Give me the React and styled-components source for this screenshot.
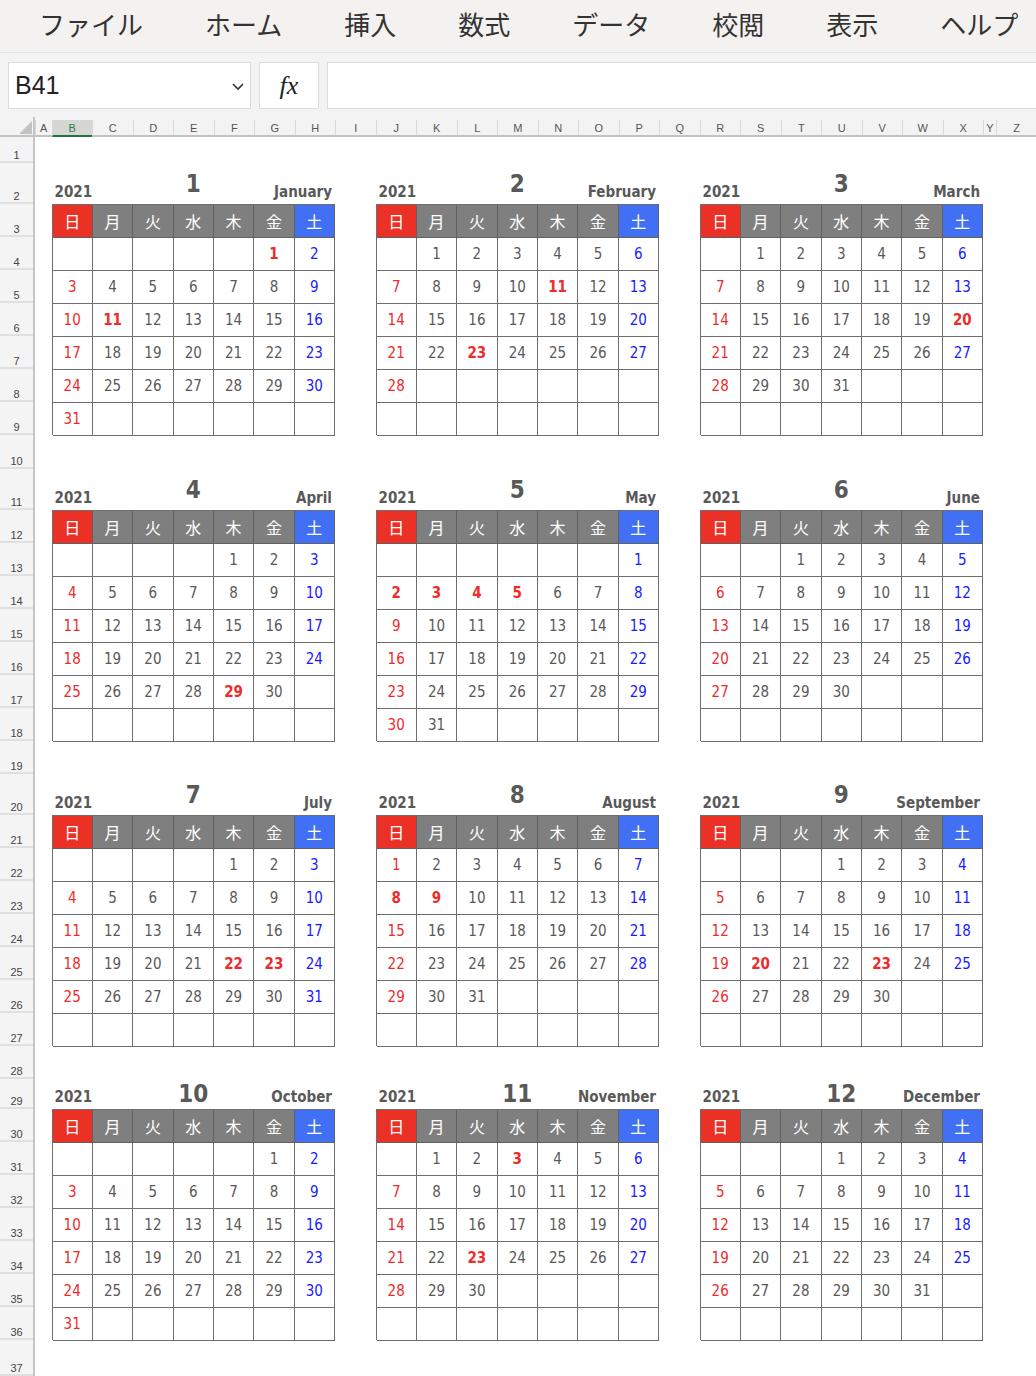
import React from 'react';
import styled, { createGlobalStyle, css } from 'styled-components';

const GlobalStyle = createGlobalStyle`
	html, body {
		margin: 0;
		padding: 0;
		background: #ffffff;
		overflow: hidden;
	}
	body {
		width: 1036px;
		height: 1376px;
		font-family: 'Noto Sans CJK JP', 'Noto Sans', sans-serif;
	}
`;

const MENU = ['ファイル', 'ホーム', '挿入', '数式', 'データ', '校閲', '表示', 'ヘルプ'];
const COLS = 'ABCDEFGHIJKLMNOPQRSTUVWXYZ'.split('');
const ROW_HEIGHTS = [
	26, 41, 33, 33, 33, 33, 33, 33, 33,
	34, 41, 33, 33, 33, 33, 33, 33, 33,
	33, 41, 33, 33, 33, 33, 33, 33, 33,
	33, 30, 33, 33, 33, 33, 33, 33, 33,
	36,
];
const COL_TEMPLATE = '16.5px repeat(23, 40.5px) 13px 1fr';
const BLOCK_ROWS = [2, 11, 20, 29];
const MONTH_NAMES = [
	'January', 'February', 'March', 'April', 'May', 'June',
	'July', 'August', 'September', 'October', 'November', 'December',
];
const WEEK = ['日', '月', '火', '水', '木', '金', '土'];
const HOLIDAYS = {
	1: [1, 11],
	2: [11, 23],
	3: [20],
	4: [29],
	5: [2, 3, 4, 5],
	7: [22, 23],
	8: [8, 9],
	9: [20, 23],
	11: [3, 23],
};

const Page = styled.div`
	width: 1036px;
	height: 1376px;
	display: flex;
	flex-direction: column;
	background: #f3f3f3;
	overflow: hidden;
`;

const MenuBar = styled.div`
	height: 53px;
	display: flex;
	align-items: center;
	gap: 62px;
	padding: 0 0 5px 39px;
	background: #f3f2f1;
	border-bottom: 1px solid #e4e4e4;
	box-sizing: border-box;
	flex-shrink: 0;
`;

const MenuItem = styled.div`
	font-family: 'Noto Sans CJK JP', sans-serif;
	font-size: 26px;
	color: #333333;
	white-space: nowrap;
	line-height: 1;
`;

const FormulaBar = styled.div`
	display: flex;
	gap: 8px;
	padding: 9px 0 0 8px;
	height: 64px;
	box-sizing: border-box;
	background: #f3f3f3;
	flex-shrink: 0;
`;

const Box = styled.div`
	height: 47px;
	box-sizing: border-box;
	background: #ffffff;
	border: 1px solid #dcdcdc;
	display: flex;
	align-items: center;
`;

const NameBox = styled(Box)`
	width: 243px;
	padding: 0 5px 0 6px;
	justify-content: space-between;
	font-family: 'Liberation Sans', Arial, sans-serif;
	font-size: 25px;
	color: #222222;
`;

const FxBox = styled(Box)`
	width: 60px;
	justify-content: center;
	font-family: 'Liberation Serif', 'Times New Roman', serif;
	font-style: italic;
	font-size: 26px;
	color: #222222;
`;

const InputBox = styled(Box)`
	flex: 1;
	border-right: none;
`;

const ColHeader = styled.div`
	display: flex;
	height: 20px;
	box-sizing: border-box;
	flex-shrink: 0;
	border-bottom: 2px solid #c2c2c2;
`;

const Corner = styled.div`
	width: 33px;
	border-right: 2px solid #c6c6c6;
	position: relative;
	flex-shrink: 0;
	&::after {
		content: '';
		position: absolute;
		right: 1px;
		bottom: 1px;
		width: 0;
		height: 0;
		border-style: solid;
		border-width: 0 0 13px 13px;
		border-color: transparent transparent #c3c3c3 transparent;
	}
`;

const ColLabels = styled.div`
	flex: 1;
	display: grid;
	grid-template-columns: ${COL_TEMPLATE};
`;

const ColLabel = styled.div`
	display: flex;
	align-items: center;
	justify-content: center;
	font-family: 'Liberation Sans', Arial, sans-serif;
	font-size: 11px;
	color: #555555;
	border-left: 1px solid #d9d9d9;
	margin-top: 3px;
	${(p) =>
		p.active &&
		css`
			background: #d6d6d3;
			color: #2e7d46;
			border-bottom: 2px solid #217346;
			margin-bottom: -2px;
		`}
`;

const Body = styled.div`
	display: flex;
	flex: 1;
	background: #ffffff;
`;

const RowHeads = styled.div`
	width: 33px;
	flex-shrink: 0;
	display: flex;
	flex-direction: column;
	background: #f4f4f4;
	border-right: 2px solid #c6c6c6;
`;

const RowHead = styled.div`
	box-sizing: border-box;
	flex-shrink: 0;
	display: flex;
	align-items: flex-end;
	justify-content: center;
	border-bottom: 2px solid #e0e0e0;
	font-family: 'Liberation Sans', Arial, sans-serif;
	font-size: 11px;
	line-height: 11px;
	color: #444444;
`;

const Sheet = styled.div`
	flex: 1;
	display: grid;
	grid-template-columns: ${COL_TEMPLATE};
	grid-template-rows: ${ROW_HEIGHTS.map((h) => `${h}px`).join(' ')};
`;

const MonthBlock = styled.div`
	grid-column: ${(p) => p.col} / span 7;
	grid-row: ${(p) => p.row} / span 8;
	display: flex;
	flex-direction: column;
	min-width: 0;
`;

const Title = styled.div`
	flex: 1;
	display: flex;
	padding: 0 3px;
	font-family: 'DejaVu Sans Condensed', 'DejaVu Sans', Verdana, sans-serif;
	font-weight: bold;
	color: #595959;
`;

const Side = styled.div`
	flex: 1;
	align-self: flex-end;
	font-size: 15px;
	line-height: 15px;
	padding-bottom: 4px;
	white-space: nowrap;
	text-align: ${(p) => (p.right ? 'right' : 'left')};
`;

const BigNum = styled.div`
	align-self: center;
	font-size: 24px;
	line-height: 24px;
`;

const Table = styled.div`
	height: 231px;
	display: grid;
	grid-template-columns: repeat(7, 1fr);
	grid-template-rows: repeat(7, 33px);
	border-left: 1px solid #6e6e6e;
	border-top: 1px solid #6e6e6e;
	box-sizing: border-box;
`;

const WEEK_BG = ['#eb3125', '#7f7f7f', '#7f7f7f', '#7f7f7f', '#7f7f7f', '#7f7f7f', '#4270f4'];

const HeadCell = styled.div`
	display: flex;
	align-items: center;
	justify-content: center;
	background: ${(p) => WEEK_BG[p.dow]};
	border-right: 1px solid #616161;
	border-bottom: 1px solid #616161;
	font-family: 'Noto Sans CJK JP', sans-serif;
	font-size: 16px;
	color: #ffffff;
`;

const DayCell = styled.div`
	display: flex;
	align-items: center;
	justify-content: center;
	background: #ffffff;
	border-right: 1px solid #6e6e6e;
	border-bottom: 1px solid #6e6e6e;
	font-family: 'DejaVu Sans Condensed', 'DejaVu Sans', Verdana, sans-serif;
	font-size: 15px;
	color: #595959;
	${(p) =>
		p.dow === 0 &&
		css`
			color: #ee2b2b;
		`}
	${(p) =>
		p.dow === 6 &&
		css`
			color: #1a1aff;
		`}
	${(p) =>
		p.holiday &&
		css`
			color: #ee2b2b;
			font-weight: bold;
		`}
`;

const Chevron = () => (
	<svg width="14" height="10" viewBox="0 0 14 10">
		<polyline points="2,3 7,8 12,3" fill="none" stroke="#333" strokeWidth="1.6" />
	</svg>
);

const Month = ({ index }) => {
	const m = index + 1;
	const first = new Date(2021, index, 1).getDay();
	const days = new Date(2021, m, 0).getDate();
	const cells = Array.from({ length: 42 }, (_, i) => {
		const d = i - first + 1;
		return d >= 1 && d <= days ? d : null;
	});
	const holidays = HOLIDAYS[m] || [];

	return (
		<MonthBlock col={2 + (index % 3) * 8} row={BLOCK_ROWS[Math.floor(index / 3)]}>
			<Title>
				<Side>2021</Side>
				<BigNum>{m}</BigNum>
				<Side right>{MONTH_NAMES[index]}</Side>
			</Title>
			<Table>
				{WEEK.map((w, i) => (
					<HeadCell key={w} dow={i}>
						{w}
					</HeadCell>
				))}
				{cells.map((d, i) => (
					<DayCell key={i} dow={i % 7} holiday={d && holidays.includes(d)}>
						{d}
					</DayCell>
				))}
			</Table>
		</MonthBlock>
	);
};

const App = () => (
	<>
		<GlobalStyle />
		<Page>
			<MenuBar>
				{MENU.map((item) => (
					<MenuItem key={item}>{item}</MenuItem>
				))}
			</MenuBar>
			<FormulaBar>
				<NameBox>
					<span>B41</span>
					<Chevron />
				</NameBox>
				<FxBox>fx</FxBox>
				<InputBox />
			</FormulaBar>
			<ColHeader>
				<Corner />
				<ColLabels>
					{COLS.map((c) => (
						<ColLabel key={c} active={c === 'B'}>
							{c}
						</ColLabel>
					))}
				</ColLabels>
			</ColHeader>
			<Body>
				<RowHeads>
					{ROW_HEIGHTS.map((h, i) => (
						<RowHead key={i} style={{ height: h }}>
							{i + 1}
						</RowHead>
					))}
				</RowHeads>
				<Sheet>
					{MONTH_NAMES.map((_, i) => (
						<Month key={i} index={i} />
					))}
				</Sheet>
			</Body>
		</Page>
	</>
);

export default App;
